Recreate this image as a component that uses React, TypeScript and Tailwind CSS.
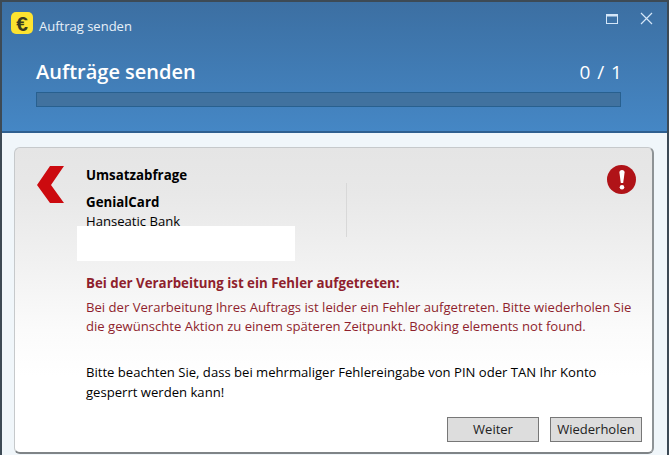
export default function App() {
  return (
    <div className="w-[669px] h-[455px] overflow-hidden bg-[#3d4a55] pt-[2px] pl-[2px] pr-[2px] font-['Open_Sans','Noto_Sans',sans-serif]">
      <div className="flex flex-col h-full">
        <div className="h-[131px] shrink-0 bg-gradient-to-b from-[#3c6fa2] to-[#4587c5] border-b-[2px] border-[#2f5f8f] flex flex-col text-white">
          <div className="flex items-start h-[49px] shrink-0">
            <div className="ml-[9px] mt-[10px] w-[22px] h-[22px] rounded-[5px] bg-[#fde330] flex items-center justify-center">
              <span className="text-[21px] leading-none font-bold text-[#3a3a20] font-['Liberation_Sans',sans-serif]">€</span>
            </div>
            <span className="ml-[6px] mt-[14px] text-[13px] leading-[20px] text-[#e8f0f8]">Auftrag senden</span>
            <div className="ml-auto mt-[10px] mr-[14px] flex items-center gap-[22px] text-[#d4e6f8]">
              <svg width="12" height="10" viewBox="0 0 12 10"><rect x="0.5" y="0.5" width="11" height="9" fill="none" stroke="currentColor" /><rect x="0" y="0" width="12" height="2.5" fill="currentColor" /></svg>
              <svg width="13" height="13" viewBox="0 0 13 13"><path d="M1 1 L12 12 M12 1 L1 12" stroke="currentColor" strokeWidth="1.2" fill="none" /></svg>
            </div>
          </div>
          <div className="flex items-center justify-between pl-[34px] pr-[44px] h-[28px] mt-[7px]">
            <span className="text-[20px] leading-[28px] font-semibold">Aufträge senden</span>
            <span className="text-[19px] leading-[28px] font-normal tracking-[1px]">0 / 1</span>
          </div>
          <div className="mx-[34px] mt-[6px] mr-[46px] h-[15px] bg-[#41729f] border border-[#28608f]" />
        </div>
        <div className="flex-1 bg-[#f0f6fa] pt-[14px] pl-[12px] pr-[13px]">
          <div className="relative h-[307px] rounded-[6px] border-t border-l border-[#c6c9cb] border-r-[2px] border-b-[2px] border-r-[#8e9396] border-b-[#7f8487] bg-[linear-gradient(to_bottom,#e5e5e5_0%,#e8e8e8_15%,#f2f2f2_40%,#fbfbfb_60%,#ffffff_75%,#ffffff_100%)] text-[13.1px] leading-[19px] text-black">
            <div className="flex h-[113px]">
              <svg className="ml-[22px] mt-[18px] shrink-0" width="27" height="38" viewBox="0 0 27 38"><path d="M13 0 H27 L14 19 L27 37 H13 L0 19 Z" fill="#cc0a0f" /></svg>
              <div className="ml-[22px] mt-[18px] flex flex-col w-[260px]">
                <span className="font-bold text-[13.3px]">Umsatzabfrage</span>
                <span className="font-bold text-[13.3px] mt-[8px]">GenialCard</span>
                <span>Hanseatic Bank</span>
              </div>
              <div className="ml-0 mt-[35px] w-px h-[54px] bg-[#d8d8d8]" />
              <div className="ml-auto mt-[17px] mr-[16px] w-[29px] h-[29px] rounded-full bg-[#b01318] flex items-center justify-center">
                <svg width="6" height="20" viewBox="0 0 6 20"><path d="M0.4 2.5 a2.6 2.5 0 0 1 5.2 0 L4.2 13 H1.8 Z" fill="#fff" /><circle cx="3" cy="17.2" r="2.3" fill="#fff" /></svg>
              </div>
            </div>
            <div className="absolute left-[62px] top-[78px] w-[218px] h-[35px] bg-white" />
            <div className="pl-[71px] pr-[10px] mt-[13px]">
              <div className="font-bold text-[13.3px] text-[#8f1f2d]">Bei der Verarbeitung ist ein Fehler aufgetreten:</div>
              <div className="mt-[5px] text-[#8f1f2d] leading-[19px] whitespace-nowrap">
                <div>Bei der Verarbeitung Ihres Auftrags ist leider ein Fehler aufgetreten. Bitte wiederholen Sie</div>
                <div>die gewünschte Aktion zu einem späteren Zeitpunkt. Booking elements not found.</div>
              </div>
              <div className="mt-[26px] leading-[20px] whitespace-nowrap">
                <div>Bitte beachten Sie, dass bei mehrmaliger Fehlereingabe von PIN oder TAN Ihr Konto</div>
                <div>gesperrt werden kann!</div>
              </div>
            </div>
            <div className="absolute right-[10px] bottom-[10px] flex gap-[11px]">
              <button className="w-[92px] h-[25px] bg-[#dddddd] border border-[#777] text-[13px] text-[#222]">Weiter</button>
              <button className="w-[92px] h-[25px] bg-[#dddddd] border border-[#777] text-[13px] text-[#222]">Wiederholen</button>
            </div>
          </div>
        </div>
      </div>
    </div>
  );
}
